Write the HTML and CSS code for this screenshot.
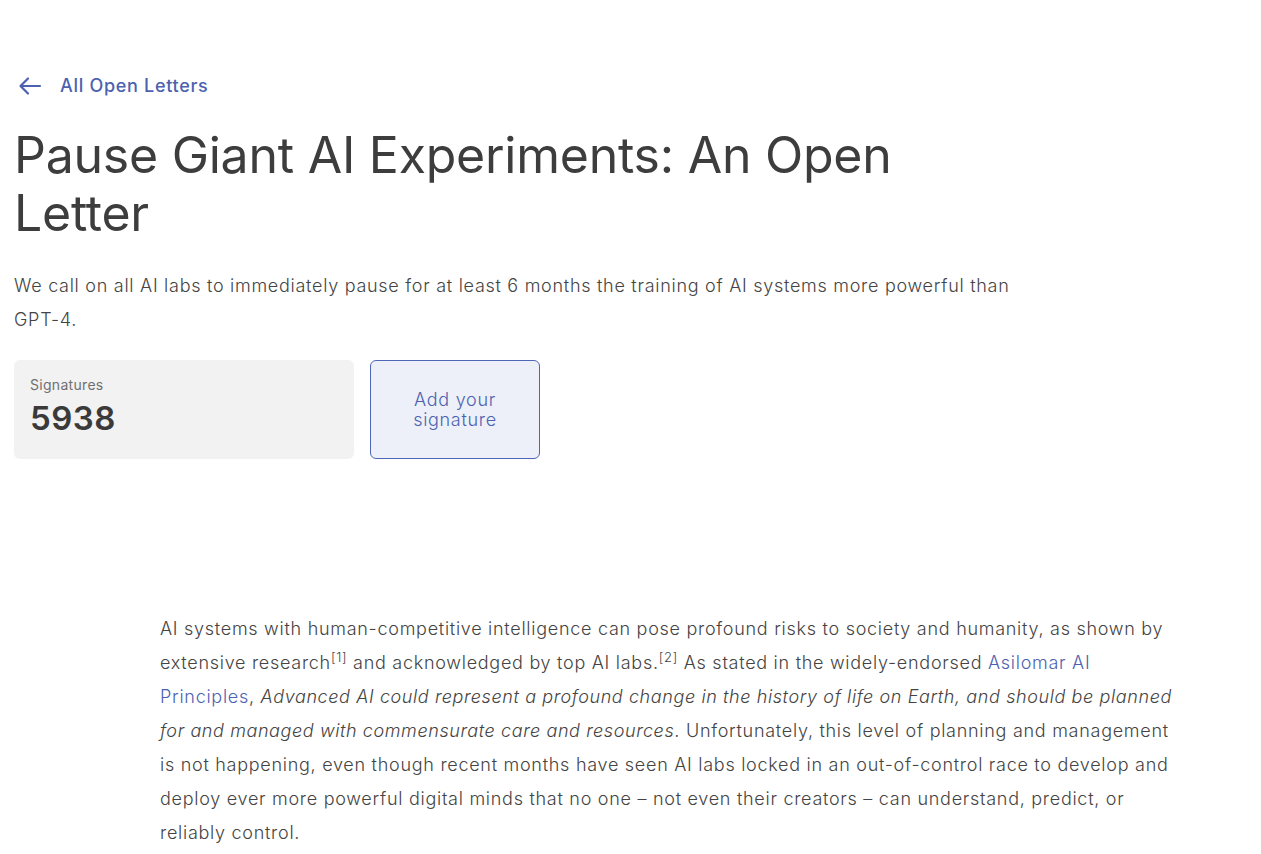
FILE: index.html
```html
<!DOCTYPE html>
<html>
<head>
<meta charset="utf-8">
<link rel="stylesheet" href="styles.css">
</head>
<body>
<header class="hero">
  <a class="back" href="#">
    <svg class="back-icon" width="24" height="24" viewBox="0 0 24 24" fill="none" stroke="currentColor" stroke-width="2.2" stroke-linecap="round" stroke-linejoin="round"><path d="M22 12H3"/><path d="M10 4.5L2.5 12l7.5 7.5"/></svg>
    <span>All Open Letters</span>
  </a>
  <h1 class="title">Pause Giant AI Experiments: An Open Letter</h1>
  <p class="lead">We call on all AI labs to immediately pause for at least 6 months the training of AI systems more powerful than GPT-4.</p>
  <div class="actions">
    <div class="sigbox">
      <div class="sig-label">Signatures</div>
      <div class="sig-count">5938</div>
    </div>
    <a class="sign-btn" href="#">Add your<br>signature</a>
  </div>
</header>
<main class="letter">
  <p>AI systems with human-competitive intelligence can pose profound risks to society and humanity, as shown by extensive research<sup>[1]</sup> and acknowledged by top AI labs.<sup>[2]</sup> As stated in the widely-endorsed <a href="#">Asilomar AI Principles</a>, <em>Advanced AI could represent a profound change in the history of life on Earth, and should be planned for and managed with commensurate care and resources</em>. Unfortunately, this level of planning and management is not happening, even though recent months have seen AI labs locked in an out-of-control race to develop and deploy ever more powerful digital minds that no one – not even their creators – can understand, predict, or reliably control.</p>
</main>
</body>
</html>
```

FILE: styles.css
```css
* { box-sizing: border-box; }
html, body { margin: 0; padding: 0; background: #fff; }
body {
  font-family: Inter, "Noto Sans", sans-serif;
  color: #3f3f3f;
}
.hero {
  padding: 72px 0 0 14px;
  width: 1038px;
}
.back {
  display: flex;
  align-items: center;
  gap: 18px;
  color: #4c62b0;
  text-decoration: none;
  font-size: 18px;
  font-weight: 500;
  line-height: 28px;
  letter-spacing: 0.7px;
  padding-left: 4px;
}
.back-icon { display: block; }
.title {
  margin: 26px 0 0 0;
  font-size: 50px;
  line-height: 58px;
  font-weight: 400;
  color: #3d3d3d;
  letter-spacing: -0.25px;
}
.lead {
  margin: 27px 0 0 0;
  font-size: 18px;
  line-height: 34px;
  color: #444;
  font-weight: 300;
  letter-spacing: 0.72px;
}
.actions {
  display: flex;
  gap: 16px;
  margin-top: 23px;
}
.sigbox {
  width: 340px;
  height: 99px;
  background: #f2f2f2;
  border-radius: 6px;
  padding: 16px 16px 0 16px;
}
.sig-label {
  font-size: 14px;
  line-height: 18px;
  color: #707070;
  letter-spacing: 0.3px;
}
.sig-count {
  margin-top: 5px;
  font-size: 33px;
  line-height: 38px;
  font-weight: 600;
  color: #3a3a3a;
  letter-spacing: 0.5px;
}
.sign-btn {
  width: 170px;
  height: 99px;
  display: flex;
  align-items: center;
  justify-content: center;
  text-align: center;
  background: #edf0f8;
  border: 1px solid #4f67b6;
  border-radius: 6px;
  color: #4c62b0;
  text-decoration: none;
  font-size: 18px;
  line-height: 20px;
  font-weight: 300;
  letter-spacing: 0.7px;
}
.letter {
  padding: 0 0 0 160px;
  margin-top: 153px;
}
.letter p {
  width: 1025px;
  margin: 0;
  font-size: 18px;
  line-height: 34px;
  color: #444;
  font-weight: 300;
  letter-spacing: 0.72px;
}
.letter em { letter-spacing: 0.6px; }
.letter a { color: #4c62b0; text-decoration: none; }
.letter sup { font-size: 13px; line-height: 0; vertical-align: 7px; }
```
